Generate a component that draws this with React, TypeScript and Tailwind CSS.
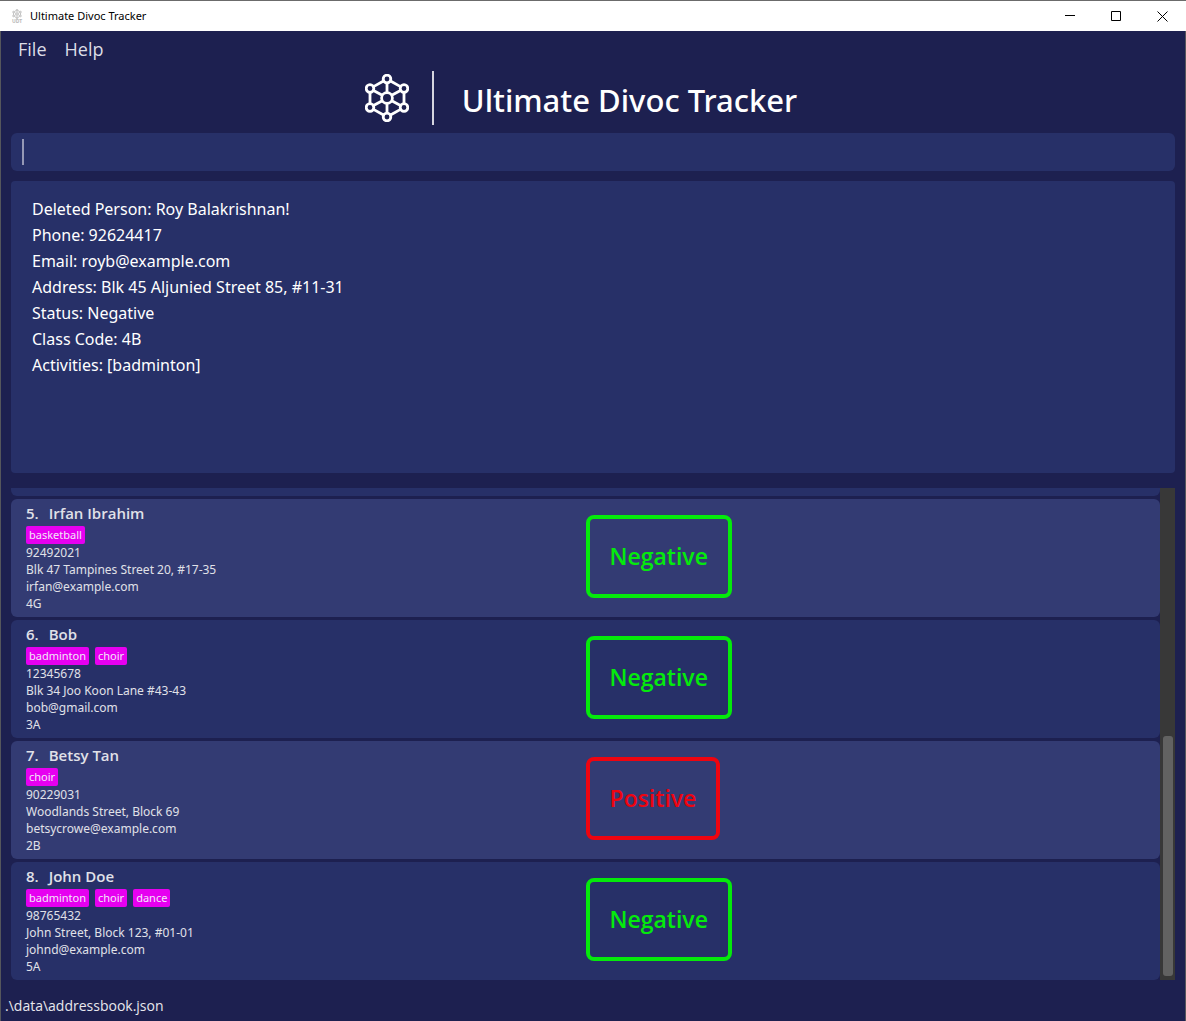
type Person = {
  id: number;
  name: string;
  tags: string[];
  phone: string;
  address: string;
  email: string;
  classCode: string;
  status: "Negative" | "Positive";
};

const people: Person[] = [
  { id: 5, name: "Irfan Ibrahim", tags: ["basketball"], phone: "92492021", address: "Blk 47 Tampines Street 20, #17-35", email: "irfan@example.com", classCode: "4G", status: "Negative" },
  { id: 6, name: "Bob", tags: ["badminton", "choir"], phone: "12345678", address: "Blk 34 Joo Koon Lane #43-43", email: "bob@gmail.com", classCode: "3A", status: "Negative" },
  { id: 7, name: "Betsy Tan", tags: ["choir"], phone: "90229031", address: "Woodlands Street, Block 69", email: "betsycrowe@example.com", classCode: "2B", status: "Positive" },
  { id: 8, name: "John Doe", tags: ["badminton", "choir", "dance"], phone: "98765432", address: "John Street, Block 123, #01-01", email: "johnd@example.com", classCode: "5A", status: "Negative" },
];

const resultLines = [
  "Deleted Person: Roy Balakrishnan!",
  "Phone: 92624417",
  "Email: royb@example.com",
  "Address: Blk 45 Aljunied Street 85, #11-31",
  "Status: Negative",
  "Class Code: 4B",
  "Activities: [badminton]",
];

const nodes = [
  [22, 5],
  [39, 14.5],
  [39, 33.5],
  [22, 43],
  [5, 33.5],
  [5, 14.5],
];

function Molecule({ className, strokeWidth }: { className: string; strokeWidth: number }) {
  return (
    <svg viewBox="0 0 44 48" className={className} fill="none" stroke="currentColor" strokeWidth={strokeWidth} aria-hidden="true">
      <path d="M18.5 7 8.5 12.6M25.5 7l10 5.6M39 18.5v11M5 18.5v11M8.5 35.4l10 5.6M35.5 35.4l-10 5.6M22 9v9.5M22 29.5V39M8.5 16.5l8.8 4.8M35.5 16.5l-8.8 4.8M8.5 31.5l8.8-4.8M35.5 31.5l-8.8-4.8" />
      {nodes.map(([x, y]) => (
        <circle key={`${x}-${y}`} cx={x} cy={y} r="3.8" />
      ))}
      <circle cx="22" cy="24" r="5.4" />
    </svg>
  );
}

function TitleBar() {
  return (
    <header className="flex h-[31px] shrink-0 items-center border-t border-[#6b6b6b] bg-white pr-px pl-2.5 text-black">
      <span className="flex w-3.5 flex-col items-center text-[#b9b9b9]">
        <Molecule className="h-2.5 w-2.5" strokeWidth={4} />
        <span className="text-[5px] leading-[5px] font-bold">UDT</span>
      </span>
      <span className="ml-1.5 text-[11px]">Ultimate Divoc Tracker</span>
      <div className="ml-auto flex h-full">
        <button aria-label="Minimize" className="flex w-[46px] items-center justify-center">
          <svg className="size-[11px]" viewBox="0 0 11 11" stroke="currentColor"><path d="M0 4.5h10" /></svg>
        </button>
        <button aria-label="Maximize" className="flex w-[46px] items-center justify-center">
          <svg className="size-[11px]" viewBox="0 0 11 11" stroke="currentColor" fill="none"><path d="M.5 .5h9v9h-9z" /></svg>
        </button>
        <button aria-label="Close" className="flex w-[46px] items-center justify-center">
          <svg className="size-[11px]" viewBox="0 0 11 11" stroke="currentColor"><path d="M.5 .5l10 10M10.5 .5l-10 10" /></svg>
        </button>
      </div>
    </header>
  );
}

function PersonCard({ person, lighter }: { person: Person; lighter: boolean }) {
  return (
    <li className={`grid shrink-0 grid-cols-2 items-start rounded-md text-[#e0e1e8] ${lighter ? "bg-[#333b73]" : "bg-[#273068]"}`}>
      <div className="pt-1 pb-[5px] pl-[15px]">
        <h2 className="flex gap-2.5 font-['Open_Sans',sans-serif] text-[15px] leading-5 font-semibold">
          <span>{person.id}.</span>
          <span>{person.name}</span>
        </h2>
        <div className="mt-[3px] flex gap-1.5">
          {person.tags.map((tag) => (
            <span key={tag} className="rounded-xs bg-[#e600f0] px-[3px] text-[11px] leading-[18px] text-[#f3e6f8]">{tag}</span>
          ))}
        </div>
        <p className="text-[12px] leading-[17px]">{person.phone}</p>
        <p className="text-[12px] leading-[17px]">{person.address}</p>
        <p className="text-[12px] leading-[17px]">{person.email}</p>
        <p className="text-[12px] leading-[17px]">{person.classCode}</p>
      </div>
      <span
        className={`mt-4 justify-self-start rounded-lg border-4 px-5 py-5 font-['Open_Sans',sans-serif] text-[23px] leading-[35px] font-semibold ${
          person.status === "Negative" ? "border-[#05ea0c] text-[#05ea0c]" : "border-[#ee0410] text-[#ee0410]"
        }`}
      >
        {person.status}
      </span>
    </li>
  );
}

export default function App() {
  return (
    <div className="flex min-h-screen flex-col border-b border-[#2b2b2b] bg-[#1d2050] font-['Noto_Sans','Open_Sans',sans-serif]">
      <TitleBar />
      <div className="flex flex-1 flex-col border-x border-[#55565c]">
        <nav className="flex gap-[18px] pl-[17px] font-['Open_Sans',sans-serif] text-[18px] leading-9 text-[#dcdde6]">
          <button>File</button>
          <button>Help</button>
        </nav>
        <div className="flex h-[66px] items-center justify-center pr-6 pb-1 text-white">
          <Molecule className="h-12 w-11" strokeWidth={2.8} />
          <span className="ml-[23px] h-[54px] w-0.5 bg-[#d5d5df]" />
          <h1 className="ml-7 pt-1 text-[31px] leading-[40px] font-medium">Ultimate Divoc Tracker</h1>
        </div>
        <main className="flex flex-1 flex-col px-2.5">
          <div className="flex h-[38px] items-center rounded-md bg-[#273068] px-[11px]">
            <span className="h-[26px] w-0.5 bg-[#9598b5]" />
            <input aria-label="Command" className="h-full min-w-0 flex-1 bg-transparent text-[16px] text-white caret-[#9598b5] outline-none" />
          </div>
          <section aria-label="Result" className="mt-2.5 h-[292px] rounded-sm bg-[#273068] px-[21px] py-[15px] text-[16px] leading-[26px] text-white">
            {resultLines.map((line) => (
              <p key={line}>{line}</p>
            ))}
          </section>
          <div className="mt-[15px] flex">
            <ul className="flex flex-1 flex-col gap-[3px]">
              <li className="h-2 rounded-b-md bg-[#273068]" />
              {people.map((person) => (
                <PersonCard key={person.id} person={person} lighter={person.id % 2 === 1} />
              ))}
            </ul>
            <div className="flex w-[15px] flex-col justify-end bg-[#383838] px-[3px] pb-1">
              <div className="h-60 w-2.5 rounded-[3px] bg-[#626262]" />
            </div>
          </div>
        </main>
        <footer className="py-[14px] pl-1 font-['Open_Sans',sans-serif] text-[14px] leading-6 text-[#e8e8ee]">.\data\addressbook.json</footer>
      </div>
    </div>
  );
}
